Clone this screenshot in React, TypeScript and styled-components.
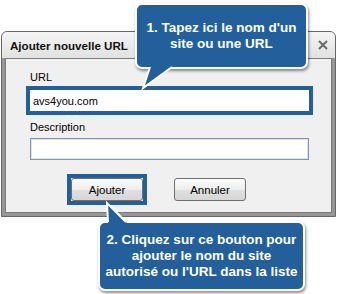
import styled, { createGlobalStyle } from 'styled-components';

const BLUE = '#23609b';

const GlobalStyle = createGlobalStyle`
  html, body {
    margin: 0;
    padding: 0;
    background: #fff;
  }
  body {
    font-family: 'Liberation Sans', Arial, sans-serif;
  }
`;

const Stage = styled.div`
  position: relative;
  width: 337px;
  height: 294px;
  box-sizing: border-box;
  padding: 31px 0 0 1px;
  overflow: hidden;
  background: #fff;
`;

const Window = styled.div`
  width: 335px;
  box-sizing: border-box;
  border: 1px solid #676767;
  border-radius: 6px 6px 0 0;
  background: #979797;
  overflow: hidden;
`;

const TitleBar = styled.div`
  height: 26px;
  display: flex;
  align-items: center;
  justify-content: space-between;
  padding: 0 7px 0 8px;
  background: linear-gradient(#f5f5f5, #e1e1e1);
`;

const Title = styled.span`
  font-size: 11.6px;
  font-weight: bold;
  color: #111;
`;

const Client = styled.div`
  height: 155px;
  box-sizing: border-box;
  margin: 0 3px 3px;
  padding: 12px 0 0 24px;
  border: 1px solid #7a7a7a;
  background: #f0f0f0;
  display: flex;
  flex-direction: column;
  align-items: flex-start;
`;

const Label = styled.label<{ $gap?: number }>`
  font-size: 11px;
  line-height: 13px;
  color: #000;
  margin-top: ${(p) => p.$gap ?? 0}px;
`;

const Highlight = styled.div<{ $gap?: number; $pull?: number }>`
  display: flex;
  border: 4px solid ${BLUE};
  margin-top: ${(p) => p.$gap ?? 0}px;
  margin-left: ${(p) => p.$pull ?? -4}px;
`;

const TextBox = styled.div<{ $framed?: boolean; $h?: number; $gap?: number }>`
  width: 279px;
  height: ${(p) => p.$h ?? 21}px;
  box-sizing: border-box;
  padding: 0 3px;
  margin-top: ${(p) => p.$gap ?? 0}px;
  display: flex;
  align-items: center;
  font-size: 11px;
  color: #000;
  background: #fff;
  border: ${(p) => (p.$framed ? '1px solid #8193b6' : 'none')};
  box-shadow: ${(p) => (p.$framed ? 'inset 0 0 0 1px #dde4ee' : 'none')};
`;

const ButtonRow = styled.div`
  display: flex;
  align-items: center;
  gap: 27px;
  margin: 14px 0 0 37px;
`;

const Button = styled.button`
  width: 72px;
  height: 23px;
  box-sizing: border-box;
  padding: 0;
  border: 1px solid #707070;
  border-radius: 3px;
  background: linear-gradient(#fcfcfc, #ededed 50%, #e0e0e0 51%, #d6d6d6);
  font-family: 'Liberation Sans', Arial, sans-serif;
  font-size: 11.5px;
  color: #000;
`;

const Callout = styled.div<{ $x: number; $y: number; $w: number; $h: number }>`
  position: absolute;
  left: ${(p) => p.$x}px;
  top: ${(p) => p.$y}px;
  width: ${(p) => p.$w}px;
  height: ${(p) => p.$h}px;
  box-sizing: border-box;
  display: flex;
  align-items: center;
  justify-content: center;
  text-align: center;
  border: 2px solid #fff;
  border-radius: 7px;
  background: ${BLUE};
  box-shadow: 1px 2px 3px rgba(0, 0, 0, 0.45);
  color: #fff;
  font-size: 13.5px;
  font-weight: bold;
  line-height: 16px;
`;

const Tails = styled.svg`
  position: absolute;
  left: 0;
  top: 0;
  pointer-events: none;
`;

function CloseGlyph() {
  return (
    <svg width="10" height="10" viewBox="0 0 10 10">
      <path d="M1 1 L9 9 M9 1 L1 9" stroke="#6a6a6a" strokeWidth="2" fill="none" />
    </svg>
  );
}

export default function App() {
  return (
    <>
      <GlobalStyle />
      <Stage>
        <Window>
          <TitleBar>
            <Title>Ajouter nouvelle URL</Title>
            <CloseGlyph />
          </TitleBar>
          <Client>
            <Label>URL</Label>
            <Highlight $gap={2}>
              <TextBox>avs4you.com</TextBox>
            </Highlight>
            <Label $gap={6}>Description</Label>
            <TextBox $framed $h={22} $gap={4} />
            <ButtonRow>
              <Highlight $pull={0}>
                <Button>Ajouter</Button>
              </Highlight>
              <Button>Annuler</Button>
            </ButtonRow>
          </Client>
        </Window>

        <Callout $x={135} $y={3} $w={173} $h={66}>
          1. Tapez ici le nom d'un
          <br />
          site ou une URL
        </Callout>
        <Callout $x={98} $y={221} $w={207} $h={70}>
          2. Cliquez sur ce bouton pour
          <br />
          ajouter le nom du site
          <br />
          autorisé ou l'URL dans la liste
        </Callout>

        <Tails width="337" height="294">
          <polygon points="150.7,65 143,88 174.8,65" fill={BLUE} />
          <path d="M150,67 L143,88 L172,67" stroke="#fff" strokeWidth="2" fill="none" />
          <polygon points="108.1,224.5 107,203 128.5,224.5" fill={BLUE} />
          <path d="M108,222 L107,203 L126,222" stroke="#fff" strokeWidth="2" fill="none" />
        </Tails>
      </Stage>
    </>
  );
}
